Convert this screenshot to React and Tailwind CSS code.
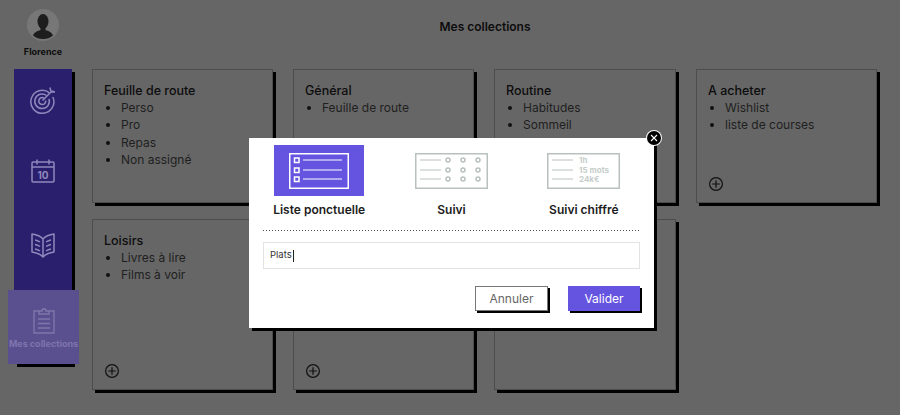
const FONT = "font-['Inter','Liberation_Sans',sans-serif]";

const collections = [
  { title: "Feuille de route", items: ["Perso", "Pro", "Repas", "Non assigné"], h: "h-[134px]" },
  { title: "Général", items: ["Feuille de route"], h: "h-[134px]" },
  { title: "Routine", items: ["Habitudes", "Sommeil"], h: "h-[134px]" },
  { title: "A acheter", items: ["Wishlist", "liste de courses"], h: "h-[134px]", plus: true },
  { title: "Loisirs", items: ["Livres à lire", "Films à voir"], h: "h-[171px]", plus: true },
  { title: "", items: [], h: "h-[171px]", plus: true },
  { title: "", items: [], h: "h-[171px]" },
];

const ROWS = [7, 17, 26];

const PlusIcon = () => (
  <svg width="16" height="16" viewBox="0 0 16 16" fill="none" stroke="#111" strokeWidth="1.2">
    <circle cx="8" cy="8" r="6.4" />
    <path d="M8 4.200v7.600M4.200 8h7.600" />
  </svg>
);

const Avatar = () => (
  <svg width="34" height="34" viewBox="0 0 34 34">
    <circle cx="17" cy="17" r="16" fill="#777" />
    <ellipse cx="17" cy="13.500" rx="5.500" ry="7.500" fill="#1d1d1d" />
    <path d="M14.500 19h5v3c3 1 6 2 7.500 5.500a15 15 0 0 1-10 3.500 15 15 0 0 1-10-3.500C8.500 24 11.500 23 14.500 22z" fill="#1d1d1d" />
  </svg>
);

const TargetIcon = () => (
  <svg width="28" height="28" viewBox="0 0 28 28" fill="none" stroke="#9088bd" strokeWidth="1.5">
    <path d="M20.500 6.800A11.500 11.500 0 1 0 23.800 11" />
    <path d="M17.500 9.500A7.300 7.300 0 1 0 20 13" />
    <path d="M15 12a3.500 3.500 0 1 0 1.700 2.500" />
    <path d="M13.500 14.500 22 6M21 1.500l.8 3.500 3.700.8M22 6h4" />
  </svg>
);

const CalendarIcon = () => (
  <svg width="26" height="26" viewBox="0 0 26 26" fill="none" stroke="#9088bd" strokeWidth="1.5">
    <rect x="2" y="4" width="22" height="20" rx="1" />
    <path d="M2 9h22M7 1.500v5M19 1.500v5" />
    <text x="13" y="20.500" textAnchor="middle" fontSize="10" fontWeight="700" fill="#9088bd" stroke="none" fontFamily="Inter">10</text>
  </svg>
);

const BookIcon = () => (
  <svg width="26" height="26" viewBox="0 0 26 26" fill="none" stroke="#9088bd" strokeWidth="1.5" strokeLinejoin="round">
    <path d="M13 7C10 3.500 6 2.500 2 2v18c4 .5 8 1.500 11 5 3-3.500 7-4.500 11-5V2c-4 .5-8 1.500-11 5zM13 7v18" />
    <path d="M5 8c2 .3 3.500 1 5 2M5 12.500c2 .3 3.500 1 5 2M5 17c2 .3 3.500 1 5 2M21 8c-2 .3-3.500 1-5 2M21 12.500c-2 .3-3.500 1-5 2M21 17c-2 .3-3.500 1-5 2" />
  </svg>
);

const ClipboardIcon = () => (
  <svg width="22" height="27" viewBox="0 0 22 27" fill="none" stroke="#7f76ab" strokeWidth="1.400">
    <path d="M6 4H1v22h20V4h-5" />
    <path d="M6 7V4h3c0-3 4-3 4 0h3v3z" />
    <path d="M5 12h12M5 16.500h12M5 21h12" />
  </svg>
);

const ListIcon = () => (
  <svg width="60" height="36" viewBox="0 0 60 36" fill="none" stroke="#fff">
    <rect x=".75" y=".75" width="58.500" height="34.500" strokeWidth="1.500" />
    {ROWS.map((y) => (
      <g key={y}>
        <rect x="5.500" y={y - 2} width="4.500" height="4.500" strokeWidth="1.500" />
        <path d={`M14 ${y}h39`} strokeWidth="1" />
      </g>
    ))}
  </svg>
);

const SuiviIcon = () => (
  <svg width="73" height="36" viewBox="0 0 73 36" fill="none" stroke="#b8c1bd">
    <rect x=".75" y=".75" width="71.500" height="34.500" strokeWidth="1.500" />
    {ROWS.map((y) => (
      <g key={y}>
        <path d={`M5 ${y}h21`} />
        <circle cx="33" cy={y} r="2" strokeWidth="1.500" />
        <circle cx="48" cy={y} r="2" strokeWidth="1.500" />
        <circle cx="63" cy={y} r="2" strokeWidth="1.500" />
      </g>
    ))}
  </svg>
);

const ChiffreIcon = () => (
  <svg width="73" height="36" viewBox="0 0 73 36" fill="none" stroke="#b8c1bd">
    <rect x=".75" y=".75" width="71.500" height="34.500" strokeWidth="1.500" />
    {[
      [7, "1h"],
      [17, "15 mots"],
      [26, "24k€"],
    ].map(([y, label]) => (
      <g key={y}>
        <path d={`M5 ${y}h21`} />
        <text x="32" y={y + 3} fontSize="8" fontWeight="700" fill="#c6cdca" stroke="none" fontFamily="Inter">
          {label}
        </text>
      </g>
    ))}
  </svg>
);

const Card = ({ title, items, h, plus }) => (
  <div className={`${h} relative border border-[#4d4d4d] bg-[#666] pl-[11px] pt-[12px] shadow-[3px_3px_0_#000]`}>
    <h2 className="text-[12.5px] font-medium leading-[17px] text-[#0d0d0d]">{title}</h2>
    <ul className="list-disc pl-[17px] text-[12px] leading-[17.3px] text-[#1f1f1f] marker:text-[#111]">
      {items.map((item) => (
        <li key={item}>{item}</li>
      ))}
    </ul>
    {plus && (
      <div className="absolute bottom-[10px] left-[11px]">
        <PlusIcon />
      </div>
    )}
  </div>
);

const Tab = ({ label, icon, active }) => (
  <div className="flex flex-1 flex-col items-center">
    <div className={`flex h-[51px] w-[90px] items-center justify-center ${active ? "bg-[#6554e0]" : ""}`}>
      {icon}
    </div>
    <span className="mt-[6px] text-[12px] font-semibold leading-[16px] text-[#1c1c1c]">{label}</span>
  </div>
);

export default function App() {
  return (
    <div className={`${FONT} relative flex h-[415px] w-[900px] flex-col overflow-hidden bg-[#666]`}>
      <header className="flex h-[69px]">
        <div className="flex w-[86px] flex-col items-center pt-[8px]">
          <Avatar />
          <span className="mt-[3px] text-[9px] font-bold leading-[13px] text-[#0d0d0d]">Florence</span>
        </div>
        <h1 className="flex-1 pr-[16px] pt-[19px] text-center text-[12px] font-semibold leading-[16px] text-[#0d0d0d]">
          Mes collections
        </h1>
      </header>

      <div className="flex items-start">
        <aside className="ml-[14px] flex h-[295px] w-[58px] flex-col items-center bg-[#2a1f6c] shadow-[3px_3px_0_#000]">
          <div className="mt-[17px]"><TargetIcon /></div>
          <div className="mt-[44px]"><CalendarIcon /></div>
          <div className="mt-[48px]"><BookIcon /></div>
          <div className="-ml-[6px] mt-[32px] flex h-[74px] w-[71px] shrink-0 flex-col items-center self-start bg-[#5a5090] pt-[17px]">
            <ClipboardIcon />
            <span className="mt-[4px] whitespace-nowrap text-[9px] font-bold leading-[12px] text-[#7f75ad]">Mes collections</span>
          </div>
        </aside>

        <main className="ml-[20px] grid grid-cols-[181px_181px_182px_181px] gap-x-[20px] gap-y-[16px]">
          {collections.map((c, i) => (
            <Card key={i} {...c} />
          ))}
        </main>
      </div>

      {/* modal */}
      <div className="absolute left-[249px] top-[138px] h-[190px] w-[405px] bg-white px-[14px] pt-[7px] shadow-[3px_3px_0_#000]">
        <div className="-mx-[10px] flex">
          <Tab label="Liste ponctuelle" icon={<ListIcon />} active />
          <Tab label="Suivi" icon={<SuiviIcon />} />
          <Tab label="Suivi chiffré" icon={<ChiffreIcon />} />
        </div>
        <div className="mt-[12px] h-px bg-[repeating-linear-gradient(90deg,#555_0_1px,transparent_1px_3px)]" />
        <div className="mt-[11px] flex h-[27px] items-center border border-[#e3e3e3] pl-[6px] text-[9.5px] text-[#333]">
          Plats<span className="ml-px h-[12px] w-px bg-[#222]" />
        </div>
        <div className="mt-[17px] flex justify-end gap-[20px]">
          <button className="h-[25px] w-[73px] border border-[#777] bg-white text-[12px] text-[#666] shadow-[2px_2px_0_#000]">
            Annuler
          </button>
          <button className="h-[25px] w-[72px] bg-[#6554e0] text-[12px] text-white shadow-[2px_2px_0_#000]">
            Valider
          </button>
        </div>
        <div className="absolute -right-[7px] -top-[7px] flex h-[14px] w-[14px] items-center justify-center rounded-full bg-black ring-1 ring-white">
          <svg width="8" height="8" viewBox="0 0 8 8" stroke="#fff" strokeWidth="1.100">
            <path d="M1 1l6 6M7 1 1 7" />
          </svg>
        </div>
      </div>
    </div>
  );
}
